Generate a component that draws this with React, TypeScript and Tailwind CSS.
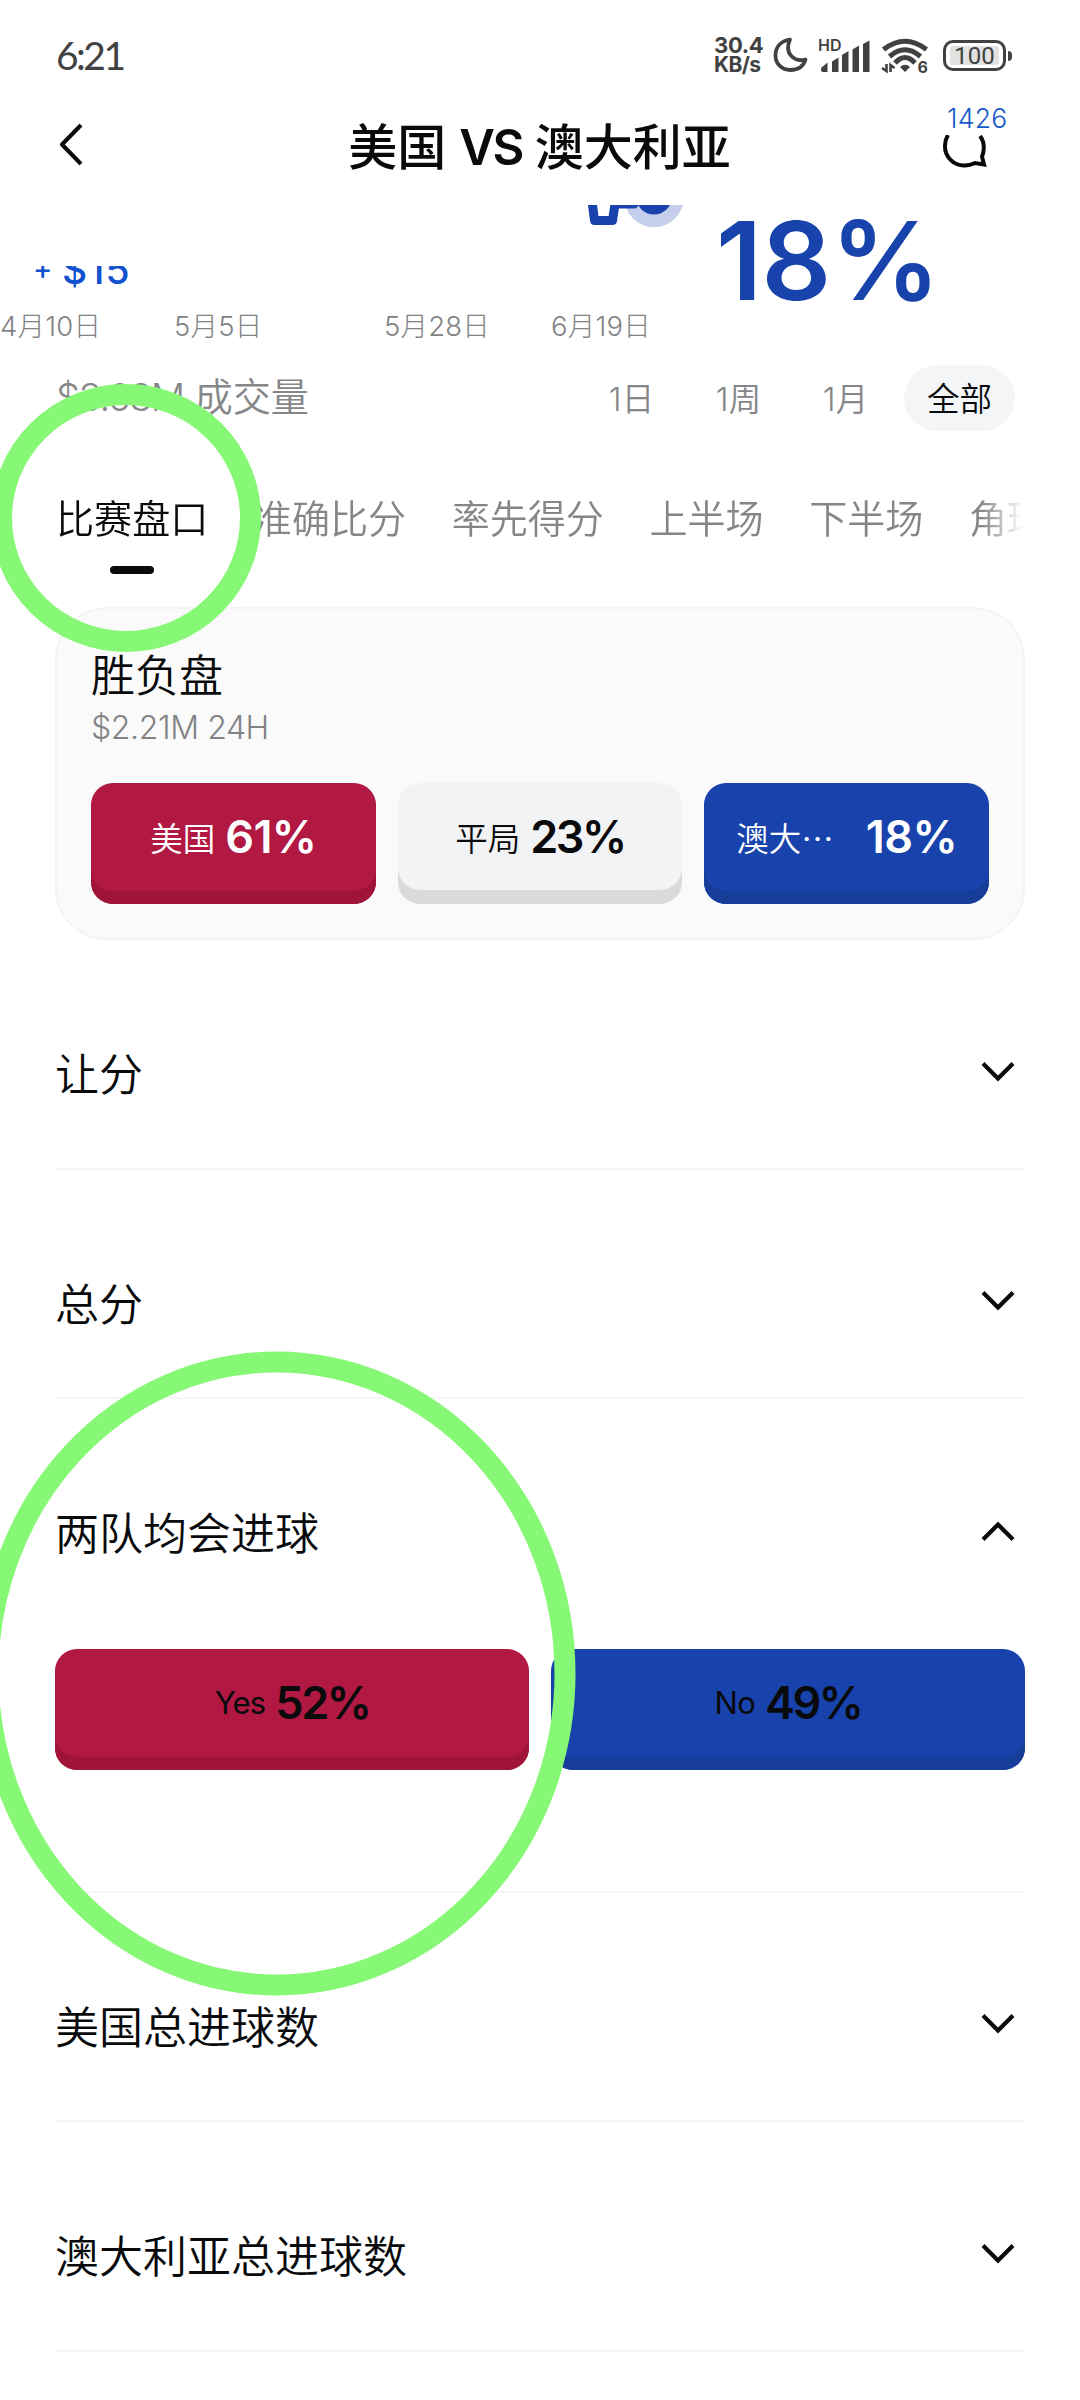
import { useState } from "react";
import clsx from "clsx";

const ranges = ["1日", "1周", "1月", "全部"];
const tabs = ["比赛盘口", "准确比分", "率先得分", "上半场", "下半场", "角球"];
const sections = [
  { id: "spread", title: "让分" },
  { id: "total", title: "总分" },
  { id: "btts", title: "两队均会进球" },
  { id: "usa", title: "美国总进球数" },
  { id: "aus", title: "澳大利亚总进球数" },
];

function StatusBar() {
  return (
    <div className="flex h-[110px] items-start justify-between pl-[56px] pr-[68px] text-[#414141]">
      <div className="mt-[31px] font-['Lato','Noto_Sans',sans-serif] text-[39px] leading-[48px] tracking-[-2.5px]">6:21</div>
      <div className="mt-[36px] flex h-[38px] items-start">
        <div className="w-[59px] font-['Inter','Noto_Sans',sans-serif] text-[22px] font-bold leading-[19px] tracking-[-0.3px]">
          <div>30.4</div>
          <div className="text-[21px] leading-[20px] tracking-[-0.6px]">KB/s</div>
        </div>
        <svg className="h-[38px] w-[36px]" viewBox="0 0 36 38" fill="none" stroke="currentColor" strokeWidth="3.8" strokeLinejoin="round">
          <path d="M17 3.500C8 5 2.500 11 2.500 19.500C2.500 28 9 34 17.500 34C25 34 30.500 30 32.500 23.500C22 26.500 10.500 18 17 3.500Z" />
        </svg>
        <svg className="ml-[10px] h-[38px] w-[52px]" viewBox="0 0 52 38" fill="currentColor">
          <text x="-1" y="15.200" fontSize="16" fontWeight="600" fontFamily="Inter">HD</text>
          <path d="M2 32l6.500-5.500v9.500H4a2 2 0 0 1-2-2zM13 25.500l6.500-4v14.500H13zM23 19l6.500-4v21H23zM33.500 13.500l6.500-4v26.500h-6.500zM44 8l6.500-3.500v31.500H44z" />
        </svg>
        <svg className="ml-[10px] h-[38px] w-[50px]" viewBox="0 0 50 38" fill="none" stroke="currentColor" strokeWidth="5">
          <path d="M2.500 13.500Q24-3 45.500 13.500" />
          <path d="M8.500 20.500Q24 7 39.500 20.500" />
          <path d="M14 27Q24 16 34 27" />
          <path d="M19 31q5-4.500 10 0l-5 5z" fill="currentColor" stroke="none" />
          <path d="M1 32l4.500 3V28M9.500 36v-7l4 3" strokeWidth="2.600" />
          <text x="36.500" y="36.500" fontSize="16" fontWeight="700" fontFamily="Inter" fill="currentColor" stroke="none">6</text>
        </svg>
        <div className="ml-[12px] mt-[4px] flex items-center gap-[2px]">
          <div className="flex h-[31px] w-[63px] items-center justify-center rounded-[10px] border-[3.5px] border-[#414141]">
            <div className="flex h-[19px] w-[49px] items-center justify-center rounded-[3px] bg-[#e2e2e2] font-['Roboto','Noto_Sans',sans-serif] text-[24px] leading-none">
              100
            </div>
          </div>
          <div className="h-[10px] w-[4px] rounded-r-[4px] bg-[#414141]" />
        </div>
      </div>
    </div>
  );
}

function Header() {
  return (
    <div className="flex h-[95px] items-start justify-between pl-[56px] pr-[72px]">
      <svg className="mt-[12px] h-[44px] w-[80px]" viewBox="0 0 80 44" fill="none" stroke="#080a0b" strokeWidth="4">
        <path d="M25 3L6 22.500L25 42" strokeLinejoin="round" />
      </svg>
      <h1 className="ml-[11px] mt-[2px] whitespace-nowrap text-[49px] font-medium leading-[72px]">
        美国 <span className="font-semibold tracking-[-2.5px]">VS</span> 澳大利亚
      </h1>
      <div className="w-[76px]">
        <div className="pl-[15px] text-[26.5px] font-light leading-[17px] tracking-[0.3px] text-[#1457c8]">1426</div>
        <svg className="ml-[10px] mt-[8px] h-[36px] w-[46px]" viewBox="0 0 46 36" fill="none" stroke="#080a0b" strokeWidth="4">
          <path d="M6 0C3.500 4 3 8 3 11A19 19 0 0 0 22.500 30.500C27 30.500 30 29.500 33 28L42 29.500L40 21.500C42 17 43.500 8 38 1" />
        </svg>
      </div>
    </div>
  );
}

function Chart() {
  return (
    <div className="flex h-[150px] flex-col">
      <div className="flex h-[100px] items-start">
        <div className="flex w-[588px] pt-[61px]">
          <div className="ml-[33px] flex h-[22px] items-end overflow-hidden whitespace-nowrap font-medium text-[#1152cf]">
            <span className="w-[29px] text-[29px] leading-[38px]">+</span>
            <span className="text-[39px] leading-[37px] tracking-[1px]">$15</span>
          </div>
        </div>
        {/* tail of the price line with its live dot */}
        <svg className="h-[24px] w-[128px]" viewBox="0 0 128 24">
          <circle cx="66" cy="-7.500" r="29.700" fill="#c5ceeb" />
          <path d="M4-4L6.500 15.500H24.500L27-1H46" fill="none" stroke="#1843ac" strokeWidth="9" strokeLinejoin="round" strokeLinecap="round" />
          <circle cx="66" cy="-8.500" r="18" fill="#1843ac" />
        </svg>
        <div className="text-[109px] font-semibold leading-[110px] tracking-[-0.5px] text-[#1843ac]">18%</div>
      </div>
      <div className="flex h-[40px] text-[27.5px] font-light leading-[42px] tracking-[0.2px] text-[#808284]">
        <span className="w-[174px]">4月10日</span>
        <span className="w-[210px]">5月5日</span>
        <span className="w-[167px]">5月28日</span>
        <span>6月19日</span>
      </div>
    </div>
  );
}

function Price(props: {
  label: string,
  value: string,
  tone: "red" | "gray" | "blue",
  dark?: boolean,
  wide?: boolean
}) {
  return (
    <button
      className={clsx(
        "flex h-[121px] flex-1 items-center justify-center rounded-[22px] pb-[13px]",
        props.tone === "red" && "bg-[#b11842] shadow-[inset_0_-13px_0_#a01439]",
        props.tone === "gray" && "bg-[#f2f3f5] shadow-[inset_0_-14px_0_#d9dadc]",
        props.tone === "blue" && "bg-[#1843ac] shadow-[inset_0_-13px_0_#163d97]",
        props.tone === "gray" || props.dark ? "text-[#080a0b]" : "text-white",
        props.wide ? "gap-[32px]" : "gap-[10px]"
      )}
    >
      <span
        className={clsx(
          props.dark ? "text-[31px] tracking-[-0.8px]" : "font-['Noto_Sans_CJK_SC',sans-serif] text-[32.5px] font-[350]"
        )}
      >
        {props.label}
      </span>
      <span className={clsx("text-[45px] font-semibold", props.tone === "gray" || props.dark ? "tracking-[-2.5px]" : "tracking-[-0.6px]")}>
        {props.value}
      </span>
    </button>
  );
}

function Chevron(props: { up: boolean }) {
  return (
    <svg className={clsx("h-[20px] w-[34px]", props.up && "rotate-180")} viewBox="0 0 34 20" fill="none" stroke="#080a0b" strokeWidth="4.200">
      <path d="M2 1.500L17 16.500L32 1.500" />
    </svg>
  );
}

export default function App() {
  const [range, setRange] = useState("全部");
  const [tab, setTab] = useState("比赛盘口");
  const [open, setOpen] = useState("btts");

  return (
    <div className="relative h-[2400px] w-[1080px] overflow-hidden bg-white font-['Inter','Noto_Sans_CJK_SC',sans-serif] text-[#080a0b]">
      <StatusBar />
      <Header />
      <Chart />

      <div className="flex h-[86px] items-center justify-between pl-[56px] pr-[65px]">
        <div className="text-[38.2px] font-[350] text-[#858688]"><span className="tracking-[-1.5px]">$3.63M</span> 成交量</div>
        <div className="flex items-center">
          {ranges.map((r) => (
            <button
              key={r}
              onClick={() => setRange(r)}
              className={clsx(
                "h-[66px] rounded-full pt-[5px] text-[32.5px] font-[350]",
                range === r ? "ml-[5px] w-[111px] bg-[#f4f5f7] text-[#080a0b]" : "w-[107px] text-[#858688]"
              )}
            >
              {r}
            </button>
          ))}
        </div>
      </div>

      <div className="ml-[56px] flex h-[166px] w-[967px] gap-[45.5px] overflow-hidden whitespace-nowrap pt-[50px] [mask-image:linear-gradient(to_right,black_925px,transparent_967px)]">
        {tabs.map((t) => (
          <button
            key={t}
            onClick={() => setTab(t)}
            className={clsx("flex shrink-0 flex-col items-center text-[38.1px] font-[350] leading-[56px]", tab === t ? "text-[#080a0b]" : "text-[#858688]")}
          >
            {t}
            {tab === t && <span className="mt-[19px] h-[8px] w-[44px] rounded-full bg-[#080a0b]" />}
          </button>
        ))}
      </div>

      <div className="mx-[55px] h-[333px] rounded-[52px] border-2 border-[#f4f4f5] bg-[#fafafa] px-[34px] pt-[35px]">
        <h2 className="text-[44px] font-[350] leading-[64px]">胜负盘</h2>
        <p className="text-[32px] font-light leading-[39px] tracking-[-0.4px] text-[#808284]">$2.21M 24H</p>
        <div className="mt-[36px] flex gap-[22px]">
          <Price label="美国" value="61%" tone="red" />
          <Price label="平局" value="23%" tone="gray" />
          <Price label="澳大…" value="18%" tone="blue" wide />
        </div>
      </div>

      <div className="mx-[55px]">
        {sections.map((s) => (
          <div key={s.id} className="border-b-2 border-[#f6f6f7]">
            <div
              className="flex h-[227.5px] items-center justify-between pr-[10px] pt-[36px]"
              onClick={() => setOpen(open === s.id ? "" : s.id)}
            >
              <h2 className="pt-[7px] text-[44px] font-[350] leading-[64px]">{s.title}</h2>
              <Chevron up={open === s.id} />
            </div>
            {open === s.id && (
              <div className="flex h-[264px] gap-[22px] pt-[22.5px]">
                <Price label="Yes" value="52%" tone="red" dark />
                <Price label="No" value="49%" tone="blue" dark />
              </div>
            )}
          </div>
        ))}
      </div>

      {/* hand drawn highlights over the page */}
      <svg className="pointer-events-none absolute inset-0 h-[2400px] w-[1080px]" fill="none" stroke="#87f875" strokeWidth="21">
        <ellipse cx="126" cy="518" rx="124.500" ry="123.500" />
        <ellipse cx="276.500" cy="1673.500" rx="288.500" ry="311.500" />
      </svg>
    </div>
  );
}
